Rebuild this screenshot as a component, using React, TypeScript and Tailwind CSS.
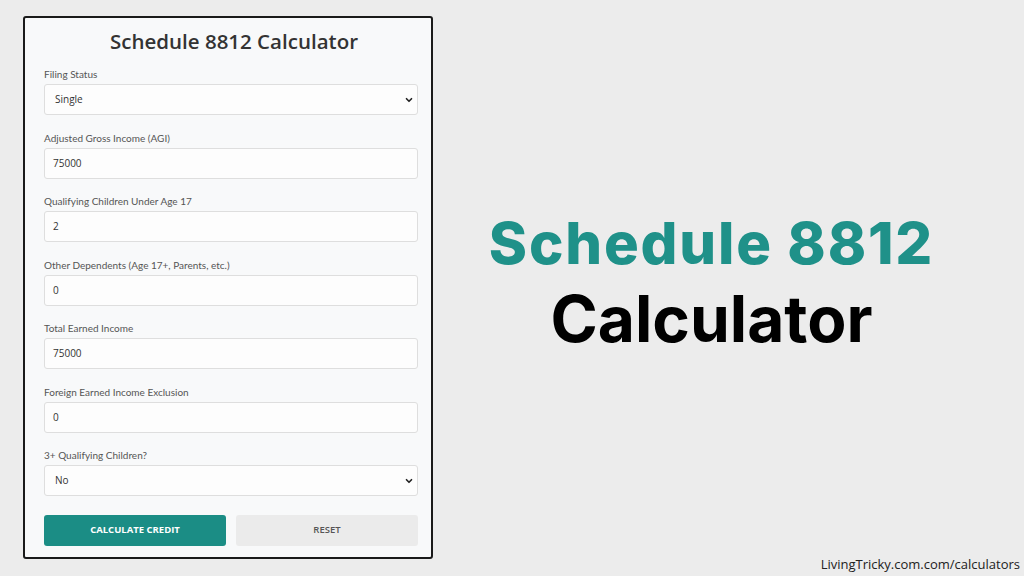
import { ChevronDown } from 'lucide-react'

const fields = [
  { label: 'Filing Status', value: 'Single', select: true },
  { label: 'Adjusted Gross Income (AGI)', value: '75000' },
  { label: 'Qualifying Children Under Age 17', value: '2' },
  { label: 'Other Dependents (Age 17+, Parents, etc.)', value: '0' },
  { label: 'Total Earned Income', value: '75000' },
  { label: 'Foreign Earned Income Exclusion', value: '0' },
  { label: '3+ Qualifying Children?', value: 'No', select: true },
]

function Field({ label, value, select }: { label: string; value: string; select?: boolean }) {
  return (
    <div className="flex flex-col">
      <label className="text-[10px] leading-[12px] text-[#555] mb-[4px]" style={{ fontFamily: 'Lato, sans-serif' }}>{label}</label>
      <div className="h-[31px] rounded-[3px] border border-[#dedede] bg-[#fdfdfd] flex items-center justify-between pl-[8px] pr-[3px]">
        <span className={`text-[10px] text-[#333] ${select ? 'pl-[2px]' : ''}`}>{value}</span>
        {select && <ChevronDown size={10} strokeWidth={4} className="text-[#222]" />}
      </div>
    </div>
  )
}

export default function App() {
  return (
    <div className="relative w-full h-[576px] bg-[#ececec] flex overflow-hidden" style={{ fontFamily: '"Open Sans", "Noto Sans", sans-serif' }}>
      <div className="ml-[23px] mt-[16px] w-[410px] h-[543px] border-2 border-[#1a1a1a] rounded-[3px] bg-[#f8f9fa] pl-[19px] pr-[13px] pt-[8px] flex flex-col">
        <h1 className="text-center text-[20.5px] font-semibold text-[#333] leading-[30px] mb-[12px] ml-[6px]">Schedule 8812 Calculator</h1>
        <div className="flex flex-col gap-[16.5px]">
          {fields.map(f => (
            <Field key={f.label} {...f} />
          ))}
        </div>
        <div className="grid grid-cols-2 gap-[10px] mt-[19px]">
          <button className="h-[31px] rounded-[3px] bg-[#1b8d85] text-white text-[9.5px] font-bold uppercase">Calculate Credit</button>
          <button className="h-[31px] rounded-[3px] bg-[#ebebeb] text-[#555] text-[9.5px] font-semibold uppercase">Reset</button>
        </div>
      </div>
      <div className="flex-1 flex flex-col items-center pt-[208px] pr-[34px]">
        <div className="text-[58px] leading-[70px] font-extrabold text-[#1f9189] tracking-[1.8px]" style={{ fontFamily: 'Inter, sans-serif' }}>Schedule 8812</div>
        <div className="text-[64px] leading-[82px] font-bold text-black" style={{ fontFamily: 'Inter, sans-serif' }}>Calculator</div>
      </div>
      <div className="absolute right-[4px] bottom-[2px] text-[13px] text-[#222]">LivingTricky.com.com/calculators</div>
    </div>
  )
}
